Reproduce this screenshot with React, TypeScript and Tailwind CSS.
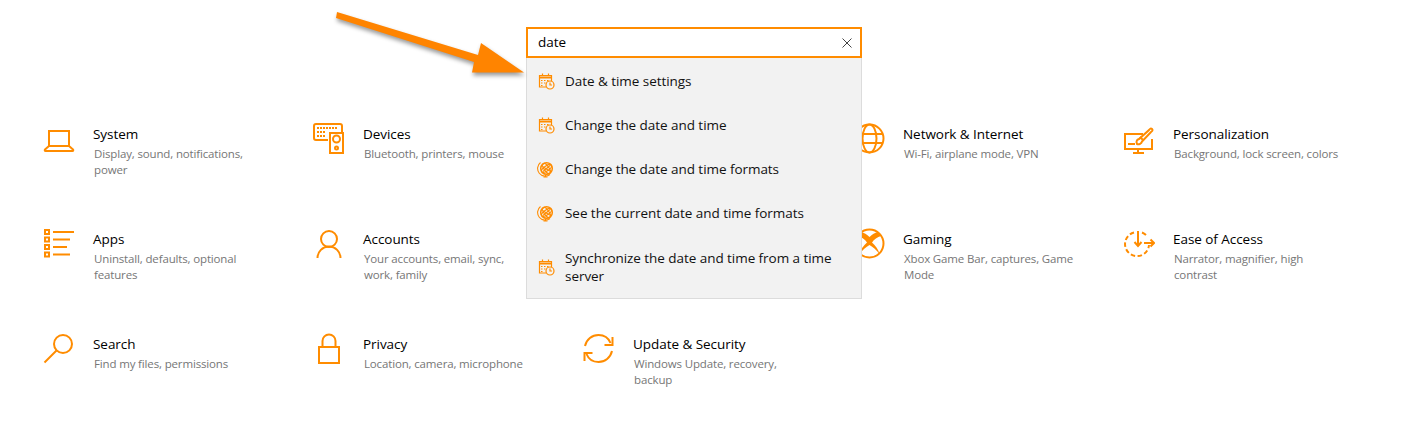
import type { ReactNode } from "react";

const strokeProps = {
  fill: "none",
  stroke: "#ff8c00",
  strokeWidth: 2,
};

function Icon({ children }: { children: ReactNode }) {
  return (
    <svg viewBox="0 0 32 32" className="h-8 w-8 shrink-0" {...strokeProps}>
      {children}
    </svg>
  );
}

const SystemIcon = () => (
  <Icon>
    <path d="M6 8h20v15H6z" />
    <path d="M6 23l-4 3.5c-.5.5-.3 1.500.5 1.500h27c.8 0 1-1 .5-1.500L26 23" />
  </Icon>
);

const DevicesIcon = () => (
  <Icon>
    <path d="M15 17H3a2 2 0 0 1-2-2V3a2 2 0 0 1 2-2h24a2 2 0 0 1 2 2v6" />
    <path d="M17 10h13v20H17z" />
    <circle cx="23.500" cy="16" r="3.500" />
    <circle cx="23.500" cy="25" r="1.500" />
    <path d="M4 5h21M4 9h9M4 13h9" strokeWidth="2" strokeDasharray="2 1" />
  </Icon>
);

const NetworkIcon = () => (
  <Icon>
    <circle cx="16.500" cy="15.500" r="14" />
    <ellipse cx="16.500" cy="15.500" rx="7" ry="14" />
    <path d="M4 11h25M4 20h25" />
  </Icon>
);

const PersonalizationIcon = () => (
  <Icon>
    <path d="M20 11H2v15h27V16" />
    <path d="M15 26v4M10 30h11" />
    <path d="M5 21h7" />
    <path d="M14 21c-1.500-3 .5-4.500 2-5L26 7c1-1.500 2-2 3-1 1 1 .5 2-1 3L19 18.500c-.5 2-3 3.500-5 2.500z" />
    <path d="M17 14l3 3" />
  </Icon>
);

const AppsIcon = () => (
  <Icon>
    <path d="M2 2h4v4H2zM2 9.500h4v4H2zM2 17h4v4H2zM2 24.500h4v4H2z" />
    <path d="M10 4h21M10 11.500h17M10 19h14M10 26.500h17" />
  </Icon>
);

const AccountsIcon = () => (
  <Icon>
    <circle cx="16" cy="11" r="8" />
    <path d="M4.500 30a11.500 11.500 0 0 1 23 0" />
  </Icon>
);

const GamingIcon = () => (
  <Icon>
    <circle cx="16.500" cy="15.500" r="14" />
    <path
      d="M8 4c3 .5 6 2.500 8.500 5C19 6.500 22 4.500 25 4l3 4c-3.500 1-7 3.500-9 6.500 3.500 3 6.500 7 7.500 11.500-3-4-6.500-7-10-9-3.500 2-7 5-10 9 1-4.500 4-8.500 7.500-11.500-2-3-5.500-5.500-9-6.500z"
      fill="#ff8c00"
      stroke="none"
    />
  </Icon>
);

const EaseIcon = () => (
  <Icon>
    <path d="M11 4.500A12 12 0 1 0 26 17" strokeDasharray="4.500 2.500" />
    <path d="M19 4.500a12 12 0 0 1 4 2.500" />
    <path d="M15 3v15M11.500 14l3.500 4 3.500-4" />
    <path d="M21 15h10M27.500 11.500L31 15l-3.500 3.500" />
  </Icon>
);

const SearchIcon = () => (
  <Icon>
    <circle cx="20" cy="11" r="9" />
    <path d="M13.500 17.500L1.500 29.500" />
  </Icon>
);

const PrivacyIcon = () => (
  <Icon>
    <path d="M6 14h20v16H6z" />
    <path d="M9.500 14V8a6.500 6.500 0 0 1 13 0v6" />
  </Icon>
);

const UpdateIcon = () => (
  <Icon>
    <path d="M2 13C3.500 6.500 9 2 15.500 2c5.500 0 10 3 12 8" />
    <path d="M29.500 4v8h-8" />
    <path d="M29 18c-1.500 6.500-7 11-13.500 11-5.500 0-10-3-12-8" />
    <path d="M1.500 28v-8h8" />
  </Icon>
);

const CalendarClock = () => (
  <svg viewBox="0 0 18 18" className="h-[18px] w-[18px] shrink-0" fill="none" stroke="#ff8c00" strokeWidth="1.200">
    <path d="M9 15H2.500V3.500h12V9" />
    <path d="M2.500 5.500h12" strokeWidth="2" />
    <path d="M5.500 1.500v2.500M11.500 1.500v2.500" />
    <path d="M4 8.500h1.500M7 8.500h1.500M10 8.500h1.500M4 11h1.500M7 11h1.500M4 13.500h1.500" />
    <circle cx="13" cy="13" r="4" />
    <path d="M13 10.500V13h2" />
  </svg>
);

const LocaleGlobe = () => (
  <svg viewBox="0 0 18 18" className="h-[18px] w-[18px] shrink-0" fill="none" stroke="#ff8c00" strokeWidth="1.100">
    <circle cx="9.500" cy="8.500" r="5.800" strokeWidth="1.500" />
    <ellipse cx="9.500" cy="8.500" rx="2.500" ry="5.800" transform="rotate(-35 9.500 8.500)" />
    <ellipse cx="9.500" cy="8.500" rx="5.800" ry="2.500" transform="rotate(-35 9.500 8.500)" />
    <path d="M5.500 6.500l8 5M6 11.500l7-6" />
    <path d="M3.500 2.500a7.500 7.500 0 0 0 9.500 12" />
    <path d="M8.500 15v2M6.500 17h4" />
  </svg>
);

const tiles = [
  { title: "System", desc: "Display, sound, notifications, power", icon: <SystemIcon /> },
  { title: "Devices", desc: "Bluetooth, printers, mouse", icon: <DevicesIcon /> },
  null,
  { title: "Network & Internet", desc: "Wi-Fi, airplane mode, VPN", icon: <NetworkIcon /> },
  { title: "Personalization", desc: "Background, lock screen, colors", icon: <PersonalizationIcon /> },
  { title: "Apps", desc: "Uninstall, defaults, optional features", icon: <AppsIcon /> },
  { title: "Accounts", desc: "Your accounts, email, sync, work,\u00a0family", icon: <AccountsIcon /> },
  null,
  { title: "Gaming", desc: "Xbox Game Bar, captures, Game Mode", icon: <GamingIcon /> },
  { title: "Ease of Access", desc: "Narrator, magnifier, high contrast", icon: <EaseIcon /> },
  { title: "Search", desc: "Find my files, permissions", icon: <SearchIcon /> },
  { title: "Privacy", desc: "Location, camera, microphone", icon: <PrivacyIcon /> },
  { title: "Update & Security", desc: "Windows Update, recovery, backup", icon: <UpdateIcon /> },
];

const results = [
  { label: "Date & time settings", icon: <CalendarClock />, rowClass: "h-11" },
  { label: "Change the date and time", icon: <CalendarClock />, rowClass: "h-11" },
  { label: "Change the date and time formats", icon: <LocaleGlobe />, rowClass: "h-11" },
  { label: "See the current date and time formats", icon: <LocaleGlobe />, rowClass: "h-11" },
  { label: "Synchronize the date and time from a time server", icon: <CalendarClock />, rowClass: "h-[63px]" },
];

export default function App() {
  return (
    <main className="relative h-[446px] overflow-hidden bg-white font-['Open_Sans',sans-serif] text-black">
      <div className="relative z-10 ml-[526px] w-[336px] pt-[27px]">
        <div className="flex h-[31px] items-center justify-between border-2 border-[#ff8c00] bg-white pl-[10px] pr-2">
          <span className="-mt-px text-[13.5px] tracking-[-0.05px]">date</span>
          <svg viewBox="0 0 10 10" className="h-2.5 w-2.5" fill="none" stroke="#444444" strokeWidth="1">
            <path d="M.5.5l9 9M9.500.5l-9 9" />
          </svg>
        </div>
        <ul className="absolute left-0 top-full w-full border border-t-0 border-[#dcdcdc] bg-[#f2f2f2] pt-px">
          {results.map((r) => (
            <li key={r.label} className={`flex items-center gap-[10px] pl-[10px] pr-[20px] ${r.rowClass}`}>
              {r.icon}
              <span className="text-[13.5px] leading-[18px] tracking-[-0.05px] text-[#111111]">{r.label}</span>
            </li>
          ))}
        </ul>
      </div>

      <div className="ml-[43px] mt-[65px] grid grid-cols-[repeat(5,270px)] auto-rows-[105px]">
        {tiles.map((t, i) =>
          t ? (
            <div key={t.title} className="flex gap-[18px]">
              {t.icon}
              <div className="w-[173px] pt-px">
                <h2 className="text-[13.5px] leading-5 tracking-[-0.05px]">{t.title}</h2>
                <p className="mt-0.5 pl-px text-[11.5px] leading-4 tracking-[-0.15px] text-[#767676]">{t.desc}</p>
              </div>
            </div>
          ) : (
            <div key={i} />
          ),
        )}
      </div>

      <svg
        viewBox="0 0 200 75"
        className="absolute left-[330px] top-[5px] z-20 h-[75px] w-[200px] drop-shadow-[1px_3px_2px_rgba(0,0,0,0.4)]"
      >
        <path d="M7 7 L148 50 L151 38 L194 67.500 L142 67.500 L144 57 L6 13 Z" fill="#ff8400" />
      </svg>
    </main>
  );
}
